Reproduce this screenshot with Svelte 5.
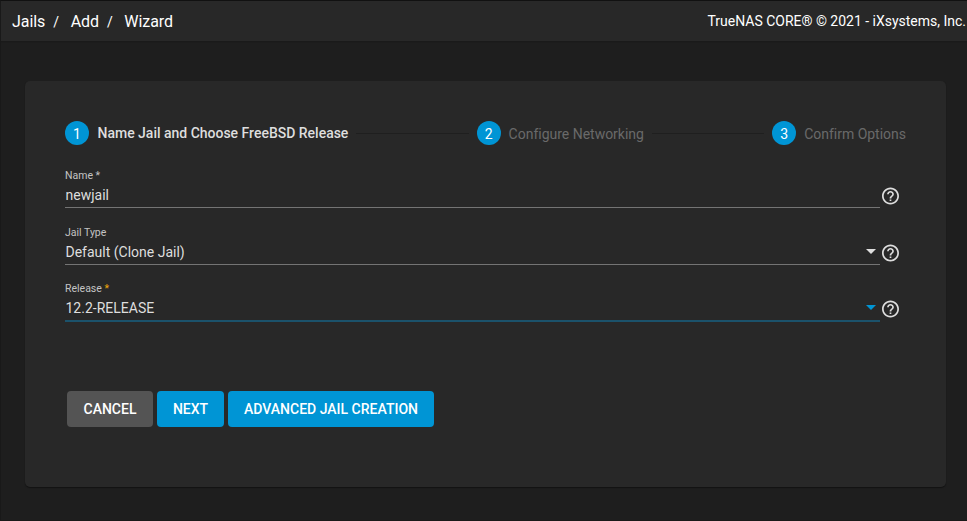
<script>
  const crumbs = ['Jails', 'Add', 'Wizard'];
  const steps = ['Name Jail and Choose FreeBSD Release', 'Configure Networking', 'Confirm Options'];
  const fields = [
    { label: 'Name', mark: ' *', value: 'newjail', kind: 'input' },
    { label: 'Jail Type', mark: '', value: 'Default (Clone Jail)', kind: 'select' },
    { label: 'Release', mark: ' *', value: '12.2-RELEASE', kind: 'select', focused: true }
  ];
</script>

<div class="page">
  <header>
    <nav>
      {#each crumbs as crumb, i}
        {#if i > 0}<span class="slash">/</span>{/if}
        <span class="crumb">{crumb}</span>
      {/each}
    </nav>
    <span class="copyright">TrueNAS CORE® © 2021 - iXsystems, Inc.</span>
  </header>

  <main class="card">
    <div class="stepper">
      {#each steps as step, i}
        {#if i > 0}<span class="line"></span>{/if}
        <div class="step" class:active={i === 0}>
          <span class="num">{i + 1}</span>
          <span class="title">{step}</span>
        </div>
      {/each}
    </div>

    <div class="fields">
      {#each fields as f}
        <div class="row" class:focused={f.focused}>
          <div class="field">
            <span class="label">{f.label}<span class="mark">{f.mark}</span></span>
            <div class="control">
              <span class="value">{f.value}</span>
              {#if f.kind === 'select'}<span class="arrow"></span>{/if}
            </div>
          </div>
          <svg class="help" viewBox="-0.35 -0.95 25.9 25.9">
            <path d="M11 18h2v-2h-2v2zm1-16C6.48 2 2 6.48 2 12s4.48 10 10 10 10-4.48 10-10S17.52 2 12 2zm0 18c-4.41 0-8-3.59-8-8s3.59-8 8-8 8 3.59 8 8-3.59 8-8 8zm0-14c-2.21 0-4 1.79-4 4h2c0-1.1.9-2 2-2s2 .9 2 2c0 2-3 1.75-3 5h2c0-2.25 3-2.5 3-5 0-2.21-1.79-4-4-4z" />
          </svg>
        </div>
      {/each}
    </div>

    <div class="actions">
      <button class="cancel">CANCEL</button>
      <button class="next">NEXT</button>
      <button class="advanced">ADVANCED JAIL CREATION</button>
    </div>
  </main>
</div>

<style>
  :global(body) { background: #1e1e1e; }
  .page {
    box-sizing: border-box;
    height: 521px;
    overflow: hidden;
    border-top: 1px solid #111;
    border-left: 1px solid #191919;
    border-bottom: 1px solid #191919;
    background: #1e1e1e;
    font-family: Roboto, "Liberation Sans", sans-serif;
    color: #fff;
  }
  header {
    height: 40px;
    display: flex;
    align-items: center;
    justify-content: space-between;
    background: #282828;
    box-shadow: 0 1px 1px #1a1a1a;
    white-space: nowrap;
  }
  nav { display: flex; align-items: center; padding-left: 11px; font-size: 16px; letter-spacing: -0.05px; }
  .slash { font-size: 14px; margin: 1px 11.6px 0 8px; }
  .copyright { font-size: 14px; padding-right: 1px; letter-spacing: -0.01px; }
  .card {
    box-sizing: border-box;
    width: 921px;
    height: 406px;
    margin: 40px 0 0 24px;
    padding: 40px;
    border-radius: 5px;
    background: #282828;
    box-shadow: 0 1px 1px #121212;
  }
  .stepper { display: flex; align-items: center; height: 24px; white-space: nowrap; }
  .step { display: flex; align-items: center; }
  .line { flex: 1; height: 1px; margin: 0 8px; background: #1f1f1f; }
  .num {
    width: 24px;
    height: 24px;
    margin-right: 8px;
    border-radius: 50%;
    background: #0095d5;
    font-size: 14px;
    line-height: 26px;
    text-align: center;
  }
  .title { font-size: 14px; line-height: 24px; padding-top: 2px; color: #6a6a6a; letter-spacing: -0.01px; }
  .active .num { margin-right: 8.5px; }
  .active .title { padding-top: 0; font-weight: 500; color: #dedede; }
  .fields { padding-top: 23px; }
  .row { display: flex; height: 57px; }
  .row:nth-child(2) { height: 56px; }
  .field { width: 815px; }
  .label {
    display: block;
    box-sizing: border-box;
    height: 14px;
    padding-top: 1px;
    font-size: 10.5px;
    line-height: 14px;
    color: #c4c4c4;
    white-space: pre;
  }
  .focused .mark { color: #f0a90a; }
  .control {
    display: flex;
    align-items: center;
    justify-content: space-between;
    height: 25px;
    border-bottom: 1px solid #747474;
    font-size: 14px;
    color: #dedede;
  }
  .value { padding-left: 0.5px; }
  .focused .control { border-bottom: 2px solid #1b526b; }
  .focused .value { padding-top: 1px; }
  .arrow {
    border: 5px solid transparent;
    border-top-color: #dedede;
    border-bottom: 0;
    margin-right: 4px;
  }
  .focused .arrow { border-top-color: #0095d5; }
  .help { width: 22px; height: 22px; margin: 17px 0 0; fill: #dedede; }
  .actions { display: flex; gap: 4px; padding: 53px 0 0 2px; }
  button {
    height: 36px;
    padding: 0;
    border: 0;
    border-radius: 4px;
    background: #0095d5;
    color: #fff;
    font: 500 14px/36px Roboto, sans-serif;
  }
  .cancel { width: 86px; background: #545454; }
  .next { width: 67px; }
  .advanced { width: 206px; }
</style>
